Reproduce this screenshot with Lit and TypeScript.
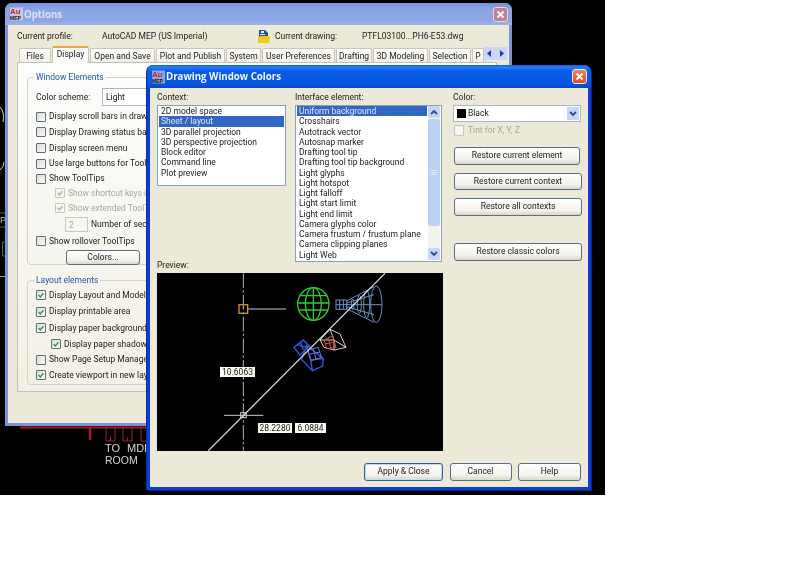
import { LitElement, css, html, svg } from "lit";
import { customElement } from "lit/decorators.js";

type Row = { label: string; h: number; on?: boolean; off?: boolean; indent?: number };

const TABS: [string, number][] = [
  ["Files", 32], ["Display", 37], ["Open and Save", 65], ["Plot and Publish", 69], ["System", 35],
  ["User Preferences", 73], ["Drafting", 36], ["3D Modeling", 55], ["Selection", 42], ["P", 12],
];
const WINDOW_ROWS_A: Row[] = [
  { label: "Display scroll bars in drawing window", h: 15.6 },
  { label: "Display Drawing status bar", h: 15.6 },
  { label: "Display screen menu", h: 15.8 },
  { label: "Use large buttons for Toolbars", h: 15.6 },
  { label: "Show ToolTips", h: 14.4 },
  { label: "Show shortcut keys in ToolTips", h: 15, on: true, off: true, indent: 19 },
  { label: "Show extended ToolTips", h: 15, on: true, off: true, indent: 19 },
];
const WINDOW_ROWS_B: Row[] = [
  { label: "Display Layout and Model tabs", h: 16 },
  { label: "Display printable area", h: 17 },
  { label: "Display paper background", h: 16.4 },
  { label: "Display paper shadow", h: 15.4, indent: 15 },
  { label: "Show Page Setup Manager for new layouts", h: 15.6 },
  { label: "Create viewport in new layouts", h: 16 },
].map((r) => ({ ...r, on: !r.label.startsWith("Show Page") }));

const CONTEXTS = ["2D model space", "Sheet / layout", "3D parallel projection", "3D perspective projection", "Block editor", "Command line", "Plot preview"];
const ELEMENTS = [
  "Uniform background", "Crosshairs", "Autotrack vector", "Autosnap marker", "Drafting tool tip",
  "Drafting tool tip background", "Light glyphs", "Light hotspot", "Light falloff", "Light start limit",
  "Light end limit", "Camera glyphs color", "Camera frustum / frustum plane", "Camera clipping planes", "Light Web",
];

const appIcon = html`<svg class="app-icon" viewBox="0 0 14 14">
  <rect width="14" height="14" fill="#f3e6e0" opacity=".55"></rect>
  <text x="0" y="7" font-size="8.5" font-weight="700" fill="#c8202c" font-family="Liberation Sans">Au</text>
  <text x="0" y="13.4" font-size="5.4" font-weight="700" fill="#111" font-family="Liberation Sans">MEP</text>
</svg>`;

const closeX = html`<svg viewBox="0 0 15 15"><path d="M4 4l7 7M11 4l-7 7" stroke="#fff" stroke-width="2.2" fill="none"></path></svg>`;

const check = html`<svg viewBox="0 0 10 10"><path d="M2 5l2.2 2.4L8 2.8" stroke="currentColor" stroke-width="1.7" fill="none"></path></svg>`;

const drawing = svg`
  <path d="M0 107q5 6 3 15M0 170q4-3 4-8" stroke="#ccc" fill="none"></path>
  <path d="M0 213h5M0 227h5M2.500 242v14h3M2.500 242h3" stroke="#2f7f3f" fill="none"></path>
  <text x="0" y="223" font-size="9" fill="#bbb" font-family="Liberation Sans">P</text>
  <path d="M0 276.500h5" stroke="#999"></path>
  <path d="M20 427.500h128" stroke="#a51d2d" stroke-width="2"></path>
  <path d="M90 427v13" stroke="#a51d2d" stroke-width="2.500"></path>
  <path d="M106 427v14h9v-14M123 427v14h9v-14M141 427v14h6M110.500 437v4M127.500 437v4" stroke="#a51d2d" fill="none"></path>
  <text x="105" y="452" font-size="11" fill="#d6d6d6" font-family="Liberation Sans">TO</text>
  <text x="127" y="452" font-size="11" fill="#d6d6d6" font-family="Liberation Sans">MDF</text>
  <text x="105" y="464" font-size="10.500" fill="#d6d6d6" font-family="Liberation Sans">ROOM</text>
  <text x="145" y="464" font-size="11" fill="#d6d6d6" font-family="Liberation Sans">1</text>
`;

/* preview coordinates are 3x page pixels so the strokes can be read off the crop */
const preview = svg`
  <path d="M280 40V572" stroke="#b5b5b0" stroke-width="3" stroke-dasharray="44 7 7 7" fill="none"></path>
  <path d="M294 147H408M222 466H340" stroke="#c9c9c9" stroke-width="3" fill="none"></path>
  <rect x="267" y="134" width="26" height="26" fill="none" stroke="#d08a3c" stroke-width="4"></rect>
  <rect x="272" y="458" width="17" height="15" fill="none" stroke="#d0d0d0" stroke-width="3"></rect>
  <g fill="none" stroke="#2fcb35" stroke-width="4">
    <ellipse cx="490" cy="132" rx="47" ry="49"></ellipse>
    <ellipse cx="490" cy="132" rx="24" ry="49"></ellipse>
    <path d="M490 83V181M449 107H531M443 129H537M448 150H532"></path>
  </g>
  <g fill="none" stroke="#6f8cc4" stroke-width="3">
    <rect x="558" y="120" width="32" height="28"></rect>
    <path d="M569 120v28M580 120v28M558 134H695M590 123L672 80M590 146L672 187M590 129L672 104M590 140L672 164"></path>
    <ellipse cx="679" cy="133" rx="17" ry="55"></ellipse>
    <ellipse cx="650" cy="133" rx="9" ry="41"></ellipse>
    <ellipse cx="628" cy="133" rx="6" ry="27"></ellipse>
    <ellipse cx="608" cy="133" rx="4" ry="16"></ellipse>
  </g>
  <g fill="none" stroke="#3555e0" stroke-width="4">
    <path d="M432 262L460 240L478 258L450 285ZM442 254L470 262L462 278M452 248L460 270"></path>
    <path d="M470 256L520 296L518 318L487 332L455 298ZM487 332L482 300L520 296M482 300L470 256"></path>
  </g>
  <g fill="none" stroke="#6a78d8" stroke-width="3">
    <path d="M472 270L505 262L514 292L484 302ZM480 282L510 276M490 266L498 298"></path>
  </g>
  <g fill="none" stroke="#e6cfcf" stroke-width="3">
    <path d="M510 240L540 208L570 222L588 262L552 270L522 262ZM540 208L552 240L588 262M552 240V270M510 240L552 240"></path>
  </g>
  <path d="M522 240L548 228L558 262L530 266ZM535 234L542 264M525 252L555 246" fill="none" stroke="#d8504c" stroke-width="3"></path>
  <path d="M175 572L705 40" stroke="#e2e2de" stroke-width="3.500" fill="none"></path>
`;

@customElement("app-root")
export class AppRoot extends LitElement {
  static styles = css`
    :host {
      display: block;
      width: 800px;
      height: 586px;
      background: #fff;
      font-family: Roboto, "Liberation Sans", Arial, sans-serif;
      font-size: 8.500px;
      line-height: 11px;
      color: #222;
      overflow: hidden;
    }
    .desktop {
      position: relative;
      width: 605px;
      height: 495px;
      background: #000;
      overflow: hidden;
      filter: blur(0.3px);
    }
    .cad {
      position: absolute;
      inset: 0;
      width: 605px;
      height: 495px;
    }
    .window {
      position: absolute;
      box-sizing: border-box;
      display: flex;
      flex-direction: column;
      border-style: solid;
      border-width: 0 3px 3px;
      border-radius: 7px 7px 0 0;
      background: #ece9d8;
    }
    .options {
      left: 5px;
      top: 3px;
      width: 507px;
      height: 423px;
      border-color: #7e92dc;
    }
    .colors {
      left: 147px;
      top: 65px;
      width: 444px;
      height: 425px;
      border-color: #0a3fcf;
      box-shadow: -1px 0 0 #0a2fa0, 1px 1px 0 #08208a;
    }
    .title {
      flex: none;
      display: flex;
      align-items: center;
      height: 23px;
      margin: 0 -3px;
      padding: 0 4px 0 5px;
      border-radius: 7px 7px 0 0;
      font-size: 9.700px;
      font-weight: 700;
      font-family: "Open Sans", "Liberation Sans", sans-serif;
    }
    .options .title {
      height: 22px;
      background: linear-gradient(#7391dc, #8ca5e4 30%, #8ea6e4 80%, #a0b4ea);
      color: #d9e1f6;
    }
    .colors .title {
      background: linear-gradient(#0c5ee6, #2a7cf6 10%, #0a5ce8 25%, #0656e4 80%, #0a48c4);
      color: #f2f6ff;
    }
    .app-icon {
      width: 13px;
      height: 14px;
      margin-right: 1px;
      flex: none;
    }
    .close {
      margin-left: auto;
      width: 15px;
      height: 15px;
      border-radius: 3px;
      border: 1px solid #e8d8de;
      box-sizing: border-box;
    }
    .close svg {
      display: block;
      width: 13px;
      height: 13px;
    }
    .options .close {
      background: #c77e98;
    }
    .colors .close {
      background: linear-gradient(#ea8560, #d9502c);
      border-color: #f2e8e0;
    }

    /* Options window */
    .profile {
      display: grid;
      grid-template-columns: 85px 156px 17px 87px 1fr;
      align-items: center;
      height: 14px;
      margin: 4px 0 0 9px;
    }
    .drawing-icon {
      width: 12px;
      height: 14px;
    }
    .tabs {
      position: relative;
      display: flex;
      align-items: flex-end;
      gap: 1px;
      height: 16px;
      margin: 3px 0 0 11px;
      z-index: 1;
    }
    .tab {
      box-sizing: border-box;
      height: 14px;
      border: 1px solid #c9c7ba;
      border-bottom: 0;
      border-radius: 2px 2px 0 0;
      background: linear-gradient(#fff, #f1efe4);
      text-align: center;
      line-height: 14px;
      white-space: nowrap;
      overflow: hidden;
    }
    .tab.active {
      height: 17px;
      margin-bottom: -1px;
      border-top: 2px solid #e9a73c;
      background: #fcfcfb;
      line-height: 13px;
    }
    .tab-arrows {
      display: flex;
      align-items: center;
      justify-content: space-around;
      width: 23px;
      height: 13px;
      margin: 0 0 2px -1px;
      background: #c9d8f6;
      color: #24408c;
    }
    .tab-arrows svg {
      width: 5px;
      height: 7px;
    }
    .panel {
      box-sizing: border-box;
      width: 480px;
      height: 330px;
      margin-left: 9px;
      padding: 9px 9px 0;
      border: 1px solid #c3c1b2;
      background: linear-gradient(#fdfdfc, #f2f0e6);
    }
    fieldset {
      margin: 0;
      padding: 0 0 0 8px;
      border: 1px solid #d5d3c5;
      border-radius: 4px;
      min-width: 0;
    }
    legend {
      margin-left: -2px;
      padding: 0 2px;
      color: #2456a8;
      line-height: 11px;
    }
    fieldset.window-elements {
      height: 193px;
      box-sizing: border-box;
    }
    fieldset.layout-elements {
      height: 110px;
      box-sizing: border-box;
      margin-top: 10px;
      padding-top: 1px;
    }
    .scheme {
      display: flex;
      align-items: center;
      height: 18px;
      margin: 5px 0 3px 0;
    }
    .scheme span {
      width: 66px;
    }
    .scheme .select {
      box-sizing: border-box;
      width: 120px;
      height: 18px;
      padding: 3px 3px;
      border: 1px solid #a9b8c6;
      background: #fff;
    }
    .row {
      display: flex;
      align-items: center;
      gap: 3px;
      white-space: nowrap;
    }
    .box {
      box-sizing: border-box;
      flex: none;
      width: 10px;
      height: 10px;
      border: 1px solid #5c6f80;
      border-radius: 1px;
      background: linear-gradient(135deg, #dedcd0, #fbfbf8);
      color: #22a32a;
    }
    .box svg {
      display: block;
      width: 8px;
      height: 8px;
    }
    .row.off {
      color: #a9a89e;
    }
    .row.off .box {
      border-color: #c8c7ba;
      background: #f6f5ee;
      color: #b4b3a8;
    }
    .seconds {
      display: flex;
      align-items: center;
      gap: 3px;
      height: 17px;
      margin-left: 29px;
    }
    .seconds .spin {
      box-sizing: border-box;
      width: 23px;
      height: 15px;
      padding: 2px 3px;
      border: 1px solid #c9c8bc;
      background: #f7f6f0;
      color: #a9a89e;
    }
    .btn {
      box-sizing: border-box;
      display: flex;
      align-items: center;
      justify-content: center;
      height: 17.500px;
      border: 1px solid #5a7082;
      border-radius: 3px;
      background: linear-gradient(#fefefd, #f4f3ec 70%, #d9d6c8);
      white-space: nowrap;
    }
    .colors-btn {
      width: 74px;
      height: 15px;
      margin: 0 0 0 30px;
    }

    /* Drawing Window Colors */
    .dialog-body {
      display: flex;
      flex-direction: column;
      flex: 1;
      padding: 4px 7px 0;
    }
    .top {
      display: grid;
      grid-template-columns: 138px 158px 1fr;
      height: 168px;
    }
    .col {
      display: flex;
      flex-direction: column;
      align-items: flex-start;
    }
    .list {
      box-sizing: border-box;
      display: flex;
      margin-top: 2px;
      padding: 0 1px 1px;
      border: 1px solid #8aa2b8;
      background: #fff;
      white-space: nowrap;
    }
    .list.context {
      width: 129px;
      height: 81px;
    }
    .list.element {
      width: 147px;
      height: 157px;
    }
    .items {
      flex: 1;
      min-width: 0;
    }
    .item {
      height: 10.270px;
      padding-left: 2px;
      line-height: 10.270px;
    }
    .item.sel {
      background: #3167c2;
      color: #dce5f6;
    }
    .scroll {
      display: flex;
      flex-direction: column;
      flex: none;
      width: 12px;
      margin-left: 1px;
      background: #f4f4ec;
    }
    .scroll .arrow {
      display: flex;
      align-items: center;
      justify-content: center;
      flex: none;
      height: 12px;
      background: #c6d6f6;
      border-radius: 2px;
      color: #2a4d96;
    }
    .scroll svg {
      width: 8px;
      height: 6px;
    }
    .scroll .thumb {
      display: flex;
      align-items: center;
      justify-content: center;
      flex: none;
      height: 107px;
      margin-top: 1px;
      border-radius: 2px;
      background: #bccff5;
    }
    .scroll .grip {
      width: 6px;
      height: 5px;
      background: repeating-linear-gradient(#e4ecfc 0 1px, transparent 1px 2px);
    }
    .scroll .track {
      flex: 1;
    }
    .combo {
      box-sizing: border-box;
      display: flex;
      align-items: center;
      width: 128px;
      height: 17px;
      margin-top: 2px;
      padding: 1px 1px 1px 3px;
      border: 1px solid #a9b8c6;
      background: #fff;
    }
    .swatch {
      width: 9px;
      height: 9px;
      margin-right: 2px;
      background: #000;
    }
    .combo .arrow {
      display: flex;
      align-items: center;
      justify-content: center;
      align-self: stretch;
      width: 12px;
      margin-left: auto;
      background: #c6d6f6;
      color: #2a4d96;
    }
    .combo svg {
      width: 8px;
      height: 6px;
    }
    .tint {
      margin: 3px 0 0 1px;
      gap: 4px;
      height: 11px;
    }
    .tint .box {
      border-color: #e0dfd4;
      background: #f4f3ea;
      height: 11px;
    }
    .restore {
      width: 128px;
      margin-left: 1px;
    }
    .restore.first {
      width: 126px;
      margin-top: 11px;
    }
    .restore.next {
      margin-top: 8px;
    }
    .restore.classic {
      margin-top: 27.500px;
    }
    .preview {
      position: relative;
      width: 286px;
      height: 178px;
      margin-top: 2px;
      background: #000;
    }
    .preview svg {
      display: block;
      width: 286px;
      height: 178px;
    }
    .tip {
      position: absolute;
      box-sizing: border-box;
      height: 10px;
      background: #fbfbef;
      color: #222;
      text-align: center;
      line-height: 10px;
    }
    .tip.a {
      left: 63px;
      top: 94px;
      width: 35px;
    }
    .tip.b {
      left: 101px;
      top: 150px;
      width: 34px;
    }
    .tip.c {
      left: 138px;
      top: 150px;
      width: 31px;
    }
    .footer {
      display: flex;
      justify-content: flex-end;
      gap: 6.500px;
      margin-top: 12px;
    }
    .footer .btn.apply {
      width: 79px;
      border-color: #2f5f96;
      box-shadow: inset 0 0 0 1px #c4d8f2;
    }
    .footer .btn.cancel {
      width: 62px;
    }
    .footer .btn.help {
      width: 63px;
    }
  `;

  private checkRow(r: Row) {
    return html`<div
      class="row ${r.off ? "off" : ""}"
      style="height:${r.h}px;margin-left:${r.indent ?? 0}px"
    >
      <span class="box">${r.on ? check : ""}</span><span>${r.label}</span>
    </div>`;
  }

  private scrollbar() {
    return html`<div class="scroll">
      <div class="arrow"><svg viewBox="0 0 8 6"><path d="M1 5l3-3 3 3" stroke="currentColor" stroke-width="1.800" fill="none"></path></svg></div>
      <div class="thumb"><span class="grip"></span></div>
      <div class="track"></div>
      <div class="arrow"><svg viewBox="0 0 8 6"><path d="M1 1l3 3 3-3" stroke="currentColor" stroke-width="1.800" fill="none"></path></svg></div>
    </div>`;
  }

  private optionsWindow() {
    return html`<section class="window options">
      <header class="title">${appIcon}<span>Options</span><span class="close">${closeX}</span></header>
      <div class="profile">
        <span>Current profile:</span>
        <span>AutoCAD MEP (US Imperial)</span>
        <svg class="drawing-icon" viewBox="0 0 12 14">
          <path d="M1 1h6l3 3v4H1z" fill="#2b4f9c"></path>
          <path d="M3 2h3v2H3zM2 5h5v1H2z" fill="#e8eefc"></path>
          <path d="M0 8l3-1h8l1 1-1 6H0z" fill="#f2c81e"></path>
        </svg>
        <span>Current drawing:</span>
        <span>PTFL03100...PH6-E53.dwg</span>
      </div>
      <div class="tabs">
        ${TABS.map(
          ([name, w]) =>
            html`<div class="tab ${name === "Display" ? "active" : ""}" style="width:${w}px">${name}</div>`,
        )}
        <div class="tab-arrows">
          <svg viewBox="0 0 5 7"><path d="M4 0v7L0 3.500z" fill="currentColor"></path></svg>
          <svg viewBox="0 0 5 7"><path d="M1 0v7l4-3.500z" fill="currentColor"></path></svg>
        </div>
      </div>
      <div class="panel">
        <fieldset class="window-elements">
          <legend>Window Elements</legend>
          <div class="scheme"><span>Color scheme:</span><div class="select">Light</div></div>
          ${WINDOW_ROWS_A.map((r) => this.checkRow(r))}
          <div class="seconds"><span class="spin">2</span><span>Number of seconds to delay</span></div>
          ${this.checkRow({ label: "Show rollover ToolTips", h: 17 })}
          <div class="btn colors-btn">Colors...</div>
        </fieldset>
        <fieldset class="layout-elements">
          <legend>Layout elements</legend>
          ${WINDOW_ROWS_B.map((r) => this.checkRow(r))}
        </fieldset>
      </div>
    </section>`;
  }

  private colorsWindow() {
    return html`<section class="window colors">
      <header class="title">${appIcon}<span>Drawing Window Colors</span><span class="close">${closeX}</span></header>
      <div class="dialog-body">
        <div class="top">
          <div class="col">
            <span>Context:</span>
            <div class="list context">
              <div class="items">
                ${CONTEXTS.map((c, i) => html`<div class="item ${i === 1 ? "sel" : ""}">${c}</div>`)}
              </div>
            </div>
          </div>
          <div class="col">
            <span>Interface element:</span>
            <div class="list element">
              <div class="items">
                ${ELEMENTS.map((c, i) => html`<div class="item ${i === 0 ? "sel" : ""}">${c}</div>`)}
              </div>
              ${this.scrollbar()}
            </div>
          </div>
          <div class="col">
            <span>Color:</span>
            <div class="combo">
              <span class="swatch"></span><span>Black</span>
              <span class="arrow"><svg viewBox="0 0 8 6"><path d="M1 1l3 3 3-3" stroke="currentColor" stroke-width="1.800" fill="none"></path></svg></span>
            </div>
            <div class="row off tint"><span class="box"></span><span>Tint for X, Y, Z</span></div>
            <div class="btn restore first">Restore current element</div>
            <div class="btn restore next">Restore current context</div>
            <div class="btn restore next">Restore all contexts</div>
            <div class="btn restore classic">Restore classic colors</div>
          </div>
        </div>
        <div>Preview:</div>
        <div class="preview">
          <svg viewBox="21 39 858 534">${preview}</svg>
          <span class="tip a">10.6063</span>
          <span class="tip b">28.2280</span>
          <span class="tip c">6.0884</span>
        </div>
        <div class="footer">
          <div class="btn apply">Apply &amp; Close</div>
          <div class="btn cancel">Cancel</div>
          <div class="btn help">Help</div>
        </div>
      </div>
    </section>`;
  }

  render() {
    return html`<div class="desktop">
      <svg class="cad" viewBox="0 0 605 495">${drawing}</svg>
      ${this.optionsWindow()} ${this.colorsWindow()}
    </div>`;
  }
}
